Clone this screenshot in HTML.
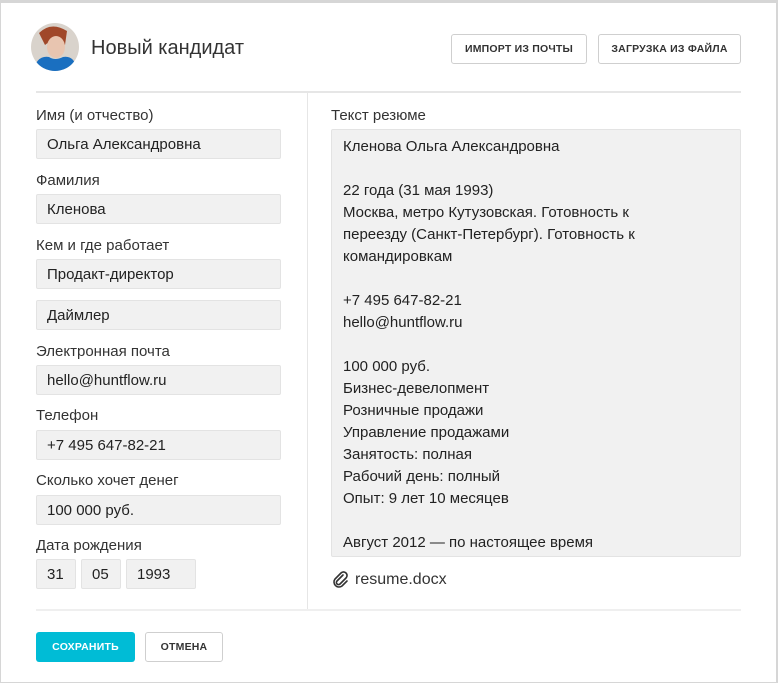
<!DOCTYPE html>
<html><head><meta charset="utf-8"><style>
*{box-sizing:border-box;margin:0;padding:0}
body{width:778px;height:683px;background:#d6d6d6;font-family:"Liberation Sans","DejaVu Sans",sans-serif;color:#333;position:relative;overflow:hidden}
.panel{position:absolute;left:1px;top:3px;width:775px;height:679px;background:#fff}
.a{position:absolute}
.lbl{position:absolute;left:36px;font-size:15px;color:#333}
.inp{position:absolute;left:36px;width:245px;height:30px;background:#f1f1f1;border:1px solid #e3e3e3;border-radius:2px;font-size:15px;line-height:30px;padding-left:10px;color:#222}
.btn{position:absolute;border:1px solid #cfcfcf;border-radius:3px;background:#fff;font-size:10.5px;font-weight:bold;text-align:center;color:#333;letter-spacing:.2px}
.ta{position:absolute;left:331px;top:129px;width:410px;height:428px;background:#f1f1f1;border:1px solid #e3e3e3;border-radius:2px;padding:6px 11px;font-size:15px;line-height:22px;color:#222;overflow:hidden;white-space:pre}
</style></head><body>
<div class="panel"></div>
<svg class="a" style="left:31px;top:23px" width="48" height="48" viewBox="0 0 48 48">
<defs><clipPath id="c"><circle cx="24" cy="24" r="24"/></clipPath></defs>
<g clip-path="url(#c)">
<rect width="48" height="48" fill="#d9d3cc"/>
<path d="M8 10 Q20 -2 36 8 L34 22 Q24 14 14 22 Z" fill="#a0482a"/>
<ellipse cx="25" cy="24" rx="9" ry="11" fill="#e8c5b0"/>
<path d="M2 48 Q6 32 18 34 Q24 38 32 34 Q44 32 46 48 Z" fill="#1a6fc0"/>
</g></svg>
<div class="a" style="left:91px;top:37px;font-size:20px;color:#333">Новый кандидат</div>
<div class="btn" style="left:451px;top:34px;width:136px;height:30px;line-height:28px">ИМПОРТ ИЗ ПОЧТЫ</div>
<div class="btn" style="left:598px;top:34px;width:143px;height:30px;line-height:28px">ЗАГРУЗКА ИЗ ФАЙЛА</div>
<div class="a" style="left:36px;top:91px;width:705px;height:2px;background:#e6e6e6"></div>
<div class="a" style="left:307px;top:93px;width:1px;height:516px;background:#e6e6e6"></div>
<div class="a" style="left:36px;top:609px;width:705px;height:2px;background:#efefef"></div>

<div class="lbl" style="top:107px">Имя (и отчество)</div>
<div class="inp" style="top:129px">Ольга Александровна</div>
<div class="lbl" style="top:172px">Фамилия</div>
<div class="inp" style="top:194px">Кленова</div>
<div class="lbl" style="top:237px">Кем и где работает</div>
<div class="inp" style="top:259px">Продакт-директор</div>
<div class="inp" style="top:300px">Даймлер</div>
<div class="lbl" style="top:343px">Электронная почта</div>
<div class="inp" style="top:365px">hello@huntflow.ru</div>
<div class="lbl" style="top:407px">Телефон</div>
<div class="inp" style="top:430px">+7 495 647-82-21</div>
<div class="lbl" style="top:472px">Сколько хочет денег</div>
<div class="inp" style="top:495px">100 000 руб.</div>
<div class="lbl" style="top:537px">Дата рождения</div>
<div class="inp" style="top:559px;width:40px">31</div>
<div class="inp" style="top:559px;left:81px;width:40px">05</div>
<div class="inp" style="top:559px;left:126px;width:70px">1993</div>

<div class="lbl" style="top:107px;left:331px">Текст резюме</div>
<div class="ta">Кленова Ольга Александровна

22 года (31 мая 1993)
Москва, метро Кутузовская. Готовность к
переезду (Санкт-Петербург). Готовность к
командировкам

+7 495 647-82-21
hello@huntflow.ru

100 000 руб.
Бизнес-девелопмент
Розничные продажи
Управление продажами
Занятость: полная
Рабочий день: полный
Опыт: 9 лет 10 месяцев

Август 2012 — по настоящее время</div>
<svg class="a" style="left:332px;top:571px" width="18" height="18" viewBox="0 0 18 18"><path d="M11 4 L5 10 a2 2 0 0 0 3 3 L14 7 a3.5 3.5 0 0 0 -5 -5 L3 8 a5 5 0 0 0 7 7 L15 10" fill="none" stroke="#333" stroke-width="1.6" stroke-linecap="round"/></svg>
<div class="a" style="left:355px;top:571px;font-size:16px;color:#333">resume.docx</div>

<div class="btn" style="left:36px;top:632px;width:99px;height:30px;line-height:30px;background:#00bcd6;border:none;color:#fff">СОХРАНИТЬ</div>
<div class="btn" style="left:145px;top:632px;width:78px;height:30px;line-height:28px">ОТМЕНА</div>
</body></html>
